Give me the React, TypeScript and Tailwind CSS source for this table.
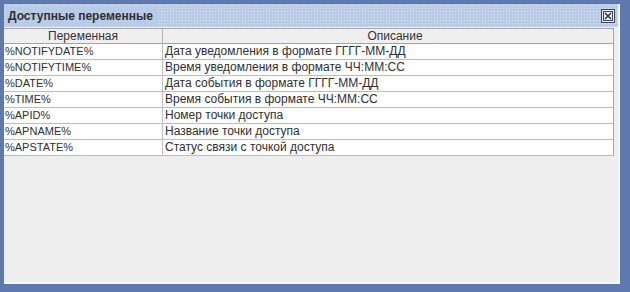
import React from "react";

const rows: [string, string][] = [
  ["%NOTIFYDATE%", "Дата уведомления в формате ГГГГ-ММ-ДД"],
  ["%NOTIFYTIME%", "Время уведомления в формате ЧЧ:ММ:СС"],
  ["%DATE%", "Дата события в формате ГГГГ-ММ-ДД"],
  ["%TIME%", "Время события в формате ЧЧ:ММ:СС"],
  ["%APID%", "Номер точки доступа"],
  ["%APNAME%", "Название точки доступа"],
  ["%APSTATE%", "Статус связи с точкой доступа"],
];

function CloseBox() {
  return (
    <div className="flex h-[14px] w-[14px] items-center justify-center border border-[#3d4654] bg-[#e8edf3]">
      <svg width="10" height="10" viewBox="0 0 10 10">
        <rect x="0.5" y="0.5" width="9" height="9" fill="none" stroke="#3d4654" strokeWidth="1" />
        <path d="M2 2 L8 8 M8 2 L2 8" stroke="#2a313b" strokeWidth="1.4" />
      </svg>
    </div>
  );
}

export default function App() {
  return (
    <div className="h-[292px] w-[630px] bg-[#5d79ae] pb-[8px] pl-[4px] pr-[10px] pt-[4px] font-['Liberation_Sans',Arial,sans-serif]">
      <div className="flex h-full flex-col border-b-2 border-r-2 border-[#f4f6f8] bg-[#eeeeee]">
        <div className="flex h-[23px] items-center justify-between bg-[#b9cbe6] bg-[radial-gradient(circle,#dde7f5_0.8px,transparent_1px)] bg-[length:3px_3px] pl-[4px] pr-[3px]">
          <span className="bg-[#b9cbe6] pr-1 text-[12px] font-bold text-[#2c2f33]">Доступные переменные</span>
          <CloseBox />
        </div>
        <div className="mr-[4px] mt-[1px] border-r border-t border-[#a7a7a7]">
          <div className="grid h-[15px] grid-cols-[159px_1fr] border-b border-[#a3a3a3] bg-[#efefef] text-[12px] leading-[14px] text-[#333]">
            <div className="border-r border-[#b5b5b5] text-center">Переменная</div>
            <div className="pl-[14px] text-center">Описание</div>
          </div>
          {rows.map(([name, desc]) => (
            <div
              key={name}
              className="grid h-[16px] grid-cols-[159px_1fr] border-b border-[#bdbdbd] bg-white leading-[15px] text-[#2f2f2f]"
            >
              <div className="border-r border-[#bdbdbd] pl-[1px] text-[11px]">{name}</div>
              <div className="pl-[2px] text-[12px]">{desc}</div>
            </div>
          ))}
        </div>
        <div className="flex-1" />
      </div>
    </div>
  );
}
